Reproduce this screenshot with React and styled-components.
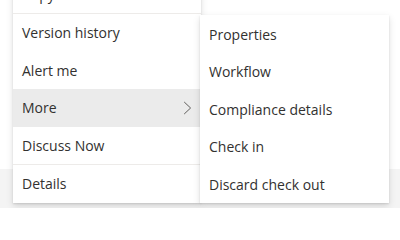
import React from "react";
import styled, { createGlobalStyle } from "styled-components";

const Global = createGlobalStyle`
  html, body { margin: 0; padding: 0; background: #ffffff; }
  body {
    font-family: "Open Sans", "Noto Sans", "Liberation Sans", sans-serif;
    -webkit-font-smoothing: antialiased;
  }
`;

const Page = styled.div`
  position: relative;
  width: 400px;
  height: 208px;
  overflow: hidden;
  display: flex;
  flex-direction: column;
  background: #ffffff;
`;

const TopArea = styled.div`
  height: 169px;
  background: #ffffff;
`;

const Band = styled.div`
  flex: 1;
  background: #f4f4f4;
`;

/* The open context menu and its flyout float over the page */
const MenuLayer = styled.div`
  position: absolute;
  left: 13px;
  top: -24.5px;
  display: flex;
  align-items: flex-start;
`;

const Menu = styled.ul`
  width: ${(p) => p.$width}px;
  margin: 0;
  padding: 0;
  list-style: none;
  background: #ffffff;
  box-shadow: 0 3.2px 7.2px rgba(0, 0, 0, 0.13), 0 0.6px 1.8px rgba(0, 0, 0, 0.11);
  position: relative;
  z-index: 1;
`;

const SubMenu = styled(Menu)`
  margin-left: -1px;
  margin-top: 39.5px;
  padding-top: 0.5px;
  z-index: 2;
`;

const Item = styled.li`
  height: 37.5px;
  display: flex;
  align-items: center;
  justify-content: space-between;
  padding: 0 9px;
  font-size: 14px;
  color: #323130;
  background: ${(p) => (p.$active ? "#ebebeb" : "transparent")};
  white-space: nowrap;
  box-sizing: border-box;
`;

const Label = styled.span`
  line-height: 1;
  padding-top: 1px;
`;

const Divider = styled.li`
  height: 1px;
  background: #edebe9;
`;

const Chevron = styled.svg`
  width: 9px;
  height: 14px;
  flex: none;
`;

function ChevronRight() {
  return (
    <Chevron viewBox="0 0 9 14">
      <polyline
        points="1.2,1 7.6,7 1.2,13"
        fill="none"
        stroke="#605e5c"
        strokeWidth="1"
      />
    </Chevron>
  );
}

const mainItems = [
  { label: "Copy to", dividerAfter: true },
  { label: "Version history" },
  { label: "Alert me" },
  { label: "More", active: true, sub: true },
  { label: "Discuss Now", dividerAfter: true },
  { label: "Details" },
];

const subItems = [
  "Properties",
  "Workflow",
  "Compliance details",
  "Check in",
  "Discard check out",
];

export default function App() {
  return (
    <>
      <Global />
      <Page>
        <TopArea />
        <Band />
        <MenuLayer>
          <Menu $width={188}>
            {mainItems.map((it) => (
              <React.Fragment key={it.label}>
                <Item $active={it.active}>
                  <Label>{it.label}</Label>
                  {it.sub && <ChevronRight />}
                </Item>
                {it.dividerAfter && <Divider />}
              </React.Fragment>
            ))}
          </Menu>
          <SubMenu $width={189}>
            {subItems.map((s) => (
              <Item key={s}>
                <Label>{s}</Label>
              </Item>
            ))}
          </SubMenu>
        </MenuLayer>
      </Page>
    </>
  );
}
